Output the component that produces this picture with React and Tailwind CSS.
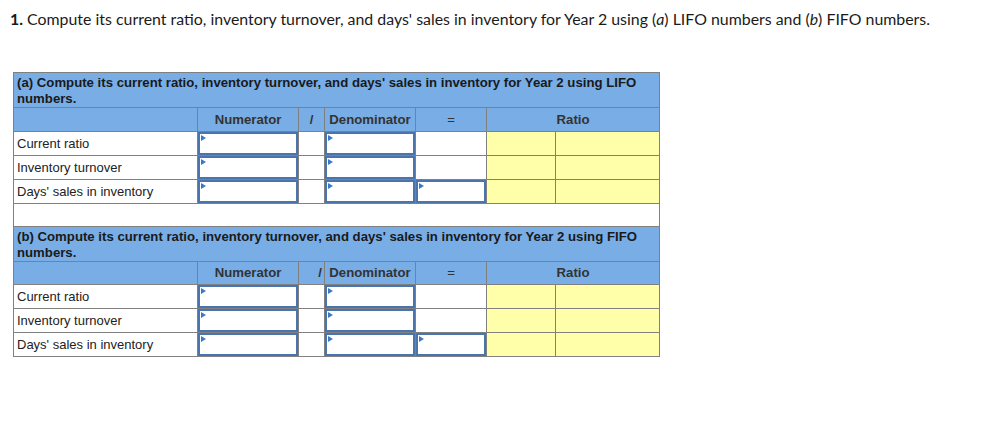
import React from "react";

const Tri = () => (
  <span className="absolute left-[1px] top-[1px] w-0 h-0 border-t-[3px] border-b-[3px] border-l-[5px] border-t-transparent border-b-transparent border-l-[#3a78c9]" />
);

const Input = () => (
  <div className="relative h-[23px] border-2 border-[#4a74ae] bg-white">
    <Tri />
  </div>
);

const cell = "border border-[#808080] p-0";

function Section({ letter, method }) {
  const rows = ["Current ratio", "Inventory turnover", "Days' sales in inventory"];
  const b = letter === "b";
  return (
    <>
      <tr className="bg-[#78ade6]">
        <td colSpan={7} className={`${cell} ${b ? "h-[34px]" : "h-[35px]"} px-[3px] pt-[2px] align-top font-bold text-[13.2px] leading-[16px] text-[#1a1a1a]`}>
          ({letter}) Compute its current ratio, inventory turnover, and days' sales in inventory for Year 2 using {method} numbers.
        </td>
      </tr>
      <tr className={`bg-[#78ade6] ${b ? "h-[23px]" : "h-[24px]"} text-[13.2px] font-bold text-[#333]`}>
        <td className={cell}></td>
        <td className={`${cell} text-center`}>Numerator</td>
        <td className={`${cell} text-center ${b ? "text-right pr-[2px]" : ""}`}>/</td>
        <td className={`${cell} text-center`}>Denominator</td>
        <td className={`${cell} text-center font-normal`}>=</td>
        <td colSpan={2} className={`${cell} text-center`}>Ratio</td>
      </tr>
      {rows.map((r, i) => (
        <tr key={r} className="h-[24px] text-[13px] text-[#222]">
          <td className={`${cell} pl-[3px] bg-white`}>{r}</td>
          <td className={cell}><Input /></td>
          <td className={`${cell} bg-white`}></td>
          <td className={cell}><Input /></td>
          <td className={`${cell} bg-white`}>{i === 2 ? <Input /> : null}</td>
          <td className={`${cell} bg-[#ffffaa]`}></td>
          <td className={`${cell} bg-[#ffffaa]`}></td>
        </tr>
      ))}
    </>
  );
}

export default function App() {
  return (
    <div className="w-[996px] h-[426px] bg-white" style={{ fontFamily: "'Liberation Sans', Arial, sans-serif" }}>
      <div className="pl-[10px] pt-[8px] text-[15.9px] leading-[22px] text-[#1a1a1a]" style={{ fontFamily: "Lato, sans-serif" }}>
        <b>1.</b> Compute its current ratio, inventory turnover, and days' sales in inventory for Year 2 using (<i>a</i>) LIFO numbers and (<i>b</i>) FIFO numbers.
      </div>
      <table className="ml-[13px] mt-[42px] border-collapse table-fixed w-[646px]">
        <colgroup>
          <col className="w-[184px]" />
          <col className="w-[101px]" />
          <col className="w-[26px]" />
          <col className="w-[91px]" />
          <col className="w-[71px]" />
          <col className="w-[69px]" />
          <col className="w-[104px]" />
        </colgroup>
        <tbody>
          <Section letter="a" method="LIFO" />
          <tr className="h-[23px] bg-white">
            <td colSpan={7} className={cell}></td>
          </tr>
          <Section letter="b" method="FIFO" />
        </tbody>
      </table>
    </div>
  );
}
